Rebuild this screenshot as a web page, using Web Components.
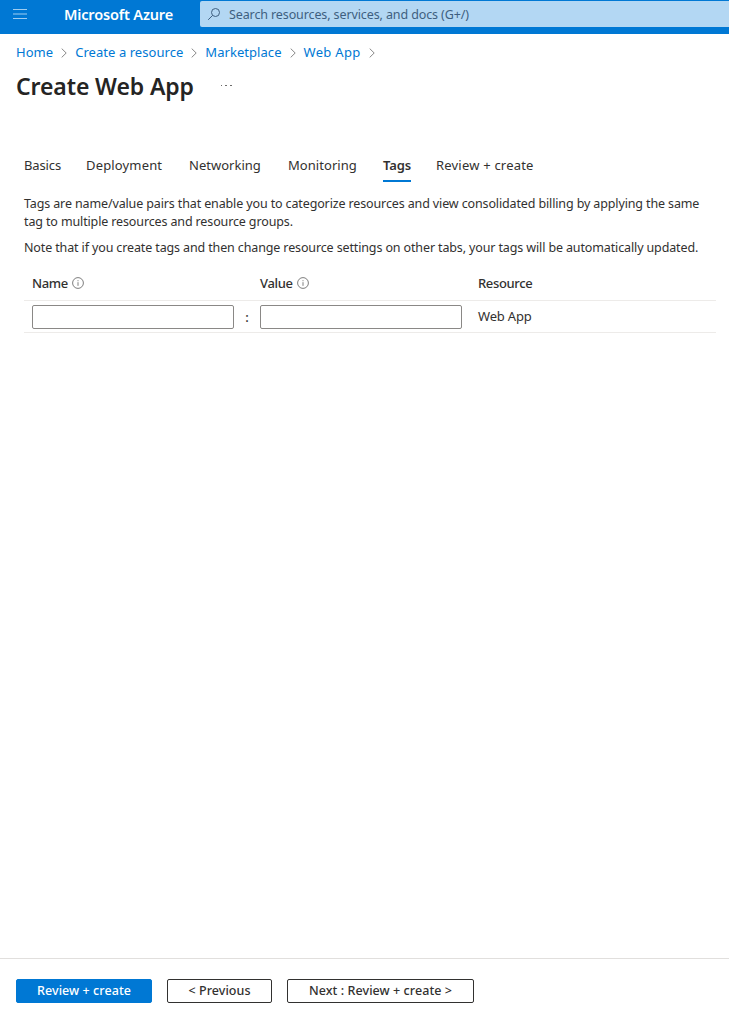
<!DOCTYPE html>
<html lang="en"><head><meta charset="utf-8"><title>Create Web App</title>
<style>
html,body{margin:0;padding:0;background:#fff}
body{font-family:"Noto Sans","Open Sans",sans-serif;color:#323130;font-size:13px}
</style></head><body>
<azure-page>
  <azure-header></azure-header>
  <azure-breadcrumb></azure-breadcrumb>
  <page-title>Create Web App</page-title>
  <tab-strip></tab-strip>
  <tags-intro></tags-intro>
  <tags-grid></tags-grid>
  <action-bar slot="footer"></action-bar>
</azure-page>
<script>
function def(name,html){
  customElements.define(name,class extends HTMLElement{
    constructor(){super();this.attachShadow({mode:'open'}).innerHTML=html;}
  });
}
const F='font-family:"Noto Sans","Open Sans",sans-serif;';
const CH='<svg viewBox="0 0 6 10"><path d="M.7.6 5.2 5 .7 9.4" fill="none" stroke="#7a7a7a" stroke-width=".9"/></svg>';
const INFO='<svg viewBox="0 0 12 12"><circle cx="6" cy="6" r="5.4" fill="none" stroke="#6f6f6f" stroke-width=".9"/><path d="M6 5.2v3.6M6 3.2v1" stroke="#6f6f6f" stroke-width=".9"/></svg>';
def('azure-page',`<style>:host{display:flex;flex-direction:column;height:1013px;overflow:hidden}
.main{flex:1;display:flex;flex-direction:column;min-height:0}</style>
<div class="main"><slot></slot></div><slot name="footer"></slot>`);
def('azure-header',`<style>:host{display:flex;height:34px;background:#0078d4;color:#fff;box-sizing:border-box;align-items:flex-start;${F}}
.m{width:40px;height:28px;display:flex;align-items:center;box-sizing:border-box;padding-left:13px}
.brand{width:160px;box-sizing:border-box;padding-left:24px;font-size:14.5px;font-weight:600;line-height:29px;white-space:nowrap;letter-spacing:-.16px}
.s{flex:1;height:26px;margin-top:1px;background:#b3d7f3;border-radius:2px 0 0 2px;display:flex;align-items:center;padding-left:7px;color:#3e5f80;font-size:12.5px;gap:8px;letter-spacing:-.11px;white-space:nowrap}
.s svg{flex:none}</style>
<div class="m"><svg width="14" height="12" viewBox="0 0 14 12"><path d="M0 1.5h14M0 6h14M0 10.5h14" stroke="#9fcdf0" stroke-width="1.2" fill="none"/></svg></div>
<div class="brand">Microsoft Azure</div>
<div class="s"><svg width="14" height="14" viewBox="0 0 14 14"><circle cx="8.5" cy="5.5" r="4" fill="none" stroke="#3e5f80" stroke-width="1"/><path d="M5.6 8.4 1.2 12.8" stroke="#3e5f80" stroke-width="1" fill="none"/></svg><span>Search resources, services, and docs (G+/)</span></div>`);
def('azure-breadcrumb',`<style>:host{display:flex;align-items:center;height:36px;padding-left:16px;font-size:13px;color:#0078d4;letter-spacing:.05px;white-space:nowrap;${F}}
svg{margin:1px 8px 0 8px;flex:none;width:6px;height:10px}.w{letter-spacing:.32px}</style>
<span>Home</span>${CH}<span>Create a resource</span>${CH}<span>Marketplace</span>${CH}<span class="w">Web App</span>${CH}`);
def('page-title',`<style>:host{display:flex;align-items:center;height:32px;padding-left:16px;color:#252423;${F}}
h1{margin:0;font-size:23px;font-weight:600;letter-spacing:-.11px;line-height:32px;white-space:nowrap}
.d{margin-left:27px;display:flex;gap:3px;margin-top:-1px}.d i{width:1.6px;height:1.6px;background:#6d6c6b;display:block}</style>
<h1><slot></slot></h1><div class="d" aria-hidden="true"><i></i><i></i><i></i></div>`);
def('tab-strip',`<style>:host{display:flex;margin-top:45px;padding-left:24px;height:36px;font-size:13px;color:#323130;white-space:nowrap;box-sizing:border-box;${F}}
div{flex:none;width:var(--w)}
span{display:inline-block;line-height:20px;padding-top:8px;height:27px;box-sizing:content-box;letter-spacing:var(--ls)}
.a{font-weight:600;border-bottom:2px solid #0078d4;height:25px}</style>
<div style="--w:62px;--ls:-.12px"><span>Basics</span></div><div style="--w:103px;--ls:.16px"><span>Deployment</span></div><div style="--w:99px;--ls:.02px"><span>Networking</span></div><div style="--w:95px;--ls:.05px"><span>Monitoring</span></div><div style="--w:53px;--ls:-.15px"><span class="a">Tags</span></div><div style="--w:100px;--ls:.2px"><span>Review + create</span></div>`);
def('tags-intro',`<style>:host{display:block;padding:12px 0 0 24px;font-size:12.5px;line-height:18px;letter-spacing:-.13px;white-space:nowrap;color:#323130;${F}}
p{margin:0 0 8px}p:last-child{margin:0}</style>
<p>Tags are name/value pairs that enable you to categorize resources and view consolidated billing by applying the same<br>tag to multiple resources and resource groups.</p>
<p>Note that if you create tags and then change resource settings on other tabs, your tags will be automatically updated.</p>`);
def('tags-grid',`<style>:host{display:block;margin:9px 13px 0 24px;font-size:13px;letter-spacing:-.17px;color:#323130;${F}}
.r{display:grid;grid-template-columns:202px 26px 202px 1fr;padding-left:8px;align-items:center;border-bottom:1px solid #edebe9;box-sizing:border-box}
.h{height:35px;font-weight:500;letter-spacing:-.35px}.b{height:32px}
.h>div{display:flex;align-items:center;gap:4px}
.c{text-align:center;font-weight:500}
.i{box-sizing:border-box;height:24px;border:1px solid #8a8886;border-radius:2px;background:#fff;width:100%;margin:0;padding:0 6px;display:block;font:inherit}
.res{padding-left:16px}.b .res{padding-bottom:2px}
svg{width:12px;height:12px;flex:none}</style>
<div class="r h"><div>Name ${INFO}</div><div></div><div>Value ${INFO}</div><div class="res">Resource</div></div>
<div class="r b"><input class="i" aria-label="Name"><div class="c">:</div><input class="i" aria-label="Value"><div class="res">Web App</div></div>`);
def('action-bar',`<style>:host{display:flex;height:55px;box-sizing:border-box;border-top:1px solid #e1dfdd;padding:20px 0 0 16px;align-items:flex-start;${F}}
button{font:inherit;font-size:12.5px;font-weight:500;letter-spacing:.07px;height:24px;box-sizing:border-box;border:1px solid #323130;border-radius:2px;background:#fff;color:#323130;padding:0 0 2px;margin:0 15px 0 0;white-space:nowrap}
.p{width:136px;background:#0078d4;border-color:#0078d4;color:#fff}.q{width:105px}.n{width:187px}</style>
<button class="p">Review + create</button><button class="q">&lt; Previous</button><button class="n">Next : Review + create &gt;</button>`);
</script>
</body></html>
